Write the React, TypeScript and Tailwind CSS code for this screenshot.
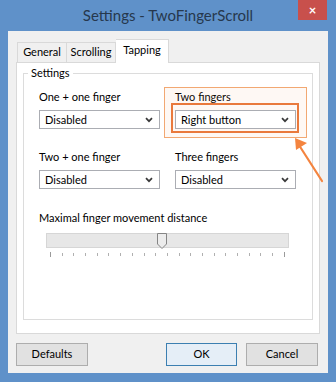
import React from "react";

const font = { fontFamily: 'Lato, "Noto Sans", sans-serif' };

function Chevron() {
  return (
    <svg width="8" height="6" viewBox="0 0 8 6" className="block">
      <path d="M1 1.2 L4 4.2 L7 1.2" fill="none" stroke="#3a3a3a" strokeWidth="1.7" />
    </svg>
  );
}

function Combo({ value }: { value: string }) {
  return (
    <div className="relative z-10 flex h-[19px] w-[121px] items-center justify-between border border-[#abadb3] bg-white pl-[5px] pr-[6px] text-[11px] leading-none text-black">
      <span>{value}</span>
      <Chevron />
    </div>
  );
}

function Field({ label, value }: { label: string; value: string }) {
  return (
    <div className="flex flex-col">
      <div className="h-[16px] text-[11px] leading-[16px] text-black">{label}</div>
      <div className="mt-[5px]">
        <Combo value={value} />
      </div>
    </div>
  );
}

export default function App() {
  const ticks = Array.from({ length: 21 }, (_, i) => i);
  return (
    <div className="relative flex h-[382px] w-[336px] flex-col bg-[#5f91c9]" style={font}>
      {/* Orange tinted highlight (behind the combo) */}
      <div className="pointer-events-none absolute left-[164px] top-[87px] z-[5] h-[51px] w-[143px] border border-[#f2a872] bg-[#f7a060]/[0.07]" />

      {/* Title bar */}
      <div className="relative flex h-[31px] items-center justify-center">
        <span className="text-[15px] text-[#26384d]">Settings - TwoFingerScroll</span>
        <div className="absolute right-[9px] top-0 flex h-[20px] w-[29px] items-center justify-center bg-[#c8504c] text-[13px] font-bold leading-none text-white">
          ×
        </div>
      </div>

      {/* Client area */}
      <div className="mx-[8px] mb-[9px] flex flex-1 flex-col bg-[#f0f0f0] px-[8px] pt-[8px]">
        {/* Tabs */}
        <div className="flex items-end pl-[1px] text-[11px] text-black">
          <div className="flex h-[20px] w-[50px] items-center justify-center border border-b-0 border-[#d9d9d9] bg-[#f0f0f0]">
            General
          </div>
          <div className="flex h-[20px] w-[49px] items-center justify-center border border-b-0 border-l-0 border-[#d9d9d9] bg-[#f0f0f0]">
            Scrolling
          </div>
          <div className="relative z-10 -mb-[1px] flex h-[24px] w-[53px] items-center justify-center border border-b-0 border-l-0 border-[#d9d9d9] bg-white pb-[2px]">
            Tapping
          </div>
        </div>

        {/* Tab panel */}
        <div className="flex h-[272px] flex-col border border-[#d9d9d9] bg-white px-[6px] pt-[10px]">
          {/* Group box */}
          <div className="relative h-[247px] border border-[#dcdcdc] pl-[15px] pt-[15px]">
            <div className="absolute -top-[9px] left-[4px] bg-white px-[3px] text-[11px] leading-[16px] text-black">
              Settings
            </div>
            <div className="grid w-[257px] grid-cols-[136px_121px] gap-y-[20px]">
              <Field label="One + one finger" value="Disabled" />
              <Field label="Two fingers" value="Right button" />
              <Field label="Two + one finger" value="Disabled" />
              <Field label="Three fingers" value="Disabled" />
            </div>

            <div className="mt-[21px] h-[16px] text-[11px] leading-[16px] text-black">
              Maximal finger movement distance
            </div>
            <div className="ml-[7px] mt-[7px] w-[243px]">
              <div className="relative h-[15px] border border-[#d6d6d6] bg-[#e7e7e7]">
                <svg
                  width="10"
                  height="16"
                  viewBox="0 0 10 16"
                  className="absolute left-[110px] top-[-1px]"
                >
                  <path d="M0.5 0.5 H9.5 V11 L5 15.5 L0.5 11 Z" fill="#ececec" stroke="#858585" />
                </svg>
              </div>
              <div className="mt-[4px] flex justify-between px-[4px]">
                {ticks.map((i) => (
                  <div
                    key={i}
                    className={
                      i === 0 || i === ticks.length - 1
                        ? "h-[5px] w-px bg-[#9a9a9a]"
                        : "mt-[1px] h-[3px] w-px bg-[#b0b0b0]"
                    }
                  />
                ))}
              </div>
            </div>
          </div>
        </div>

        {/* Buttons */}
        <div className="mt-[9px] flex text-[11px] text-black">
          <div className="flex h-[23px] w-[72px] items-center justify-center border border-[#adadad] bg-[#e1e1e1]">
            Defaults
          </div>
          <div className="ml-[78px] flex h-[23px] w-[71px] items-center justify-center border border-[#3c7fb1] bg-[#e5eef7]">
            OK
          </div>
          <div className="ml-[9px] flex h-[23px] w-[72px] items-center justify-center border border-[#adadad] bg-[#e1e1e1]">
            Cancel
          </div>
        </div>
      </div>

      {/* Orange annotation overlay */}
      <div className="pointer-events-none absolute left-[171px] top-[103px] z-20 h-[30px] w-[128px] border-2 border-[#e9793c]" />
      <svg
        className="pointer-events-none absolute left-0 top-0 z-20"
        width="336"
        height="382"
        viewBox="0 0 336 382"
      >
        <line x1="322" y1="181" x2="297" y2="142" stroke="#f4843f" strokeWidth="2.2" strokeLinecap="round" />
        <path d="M295 138 L296 150 L307 143 Z" fill="#f4843f" />
      </svg>
    </div>
  );
}
